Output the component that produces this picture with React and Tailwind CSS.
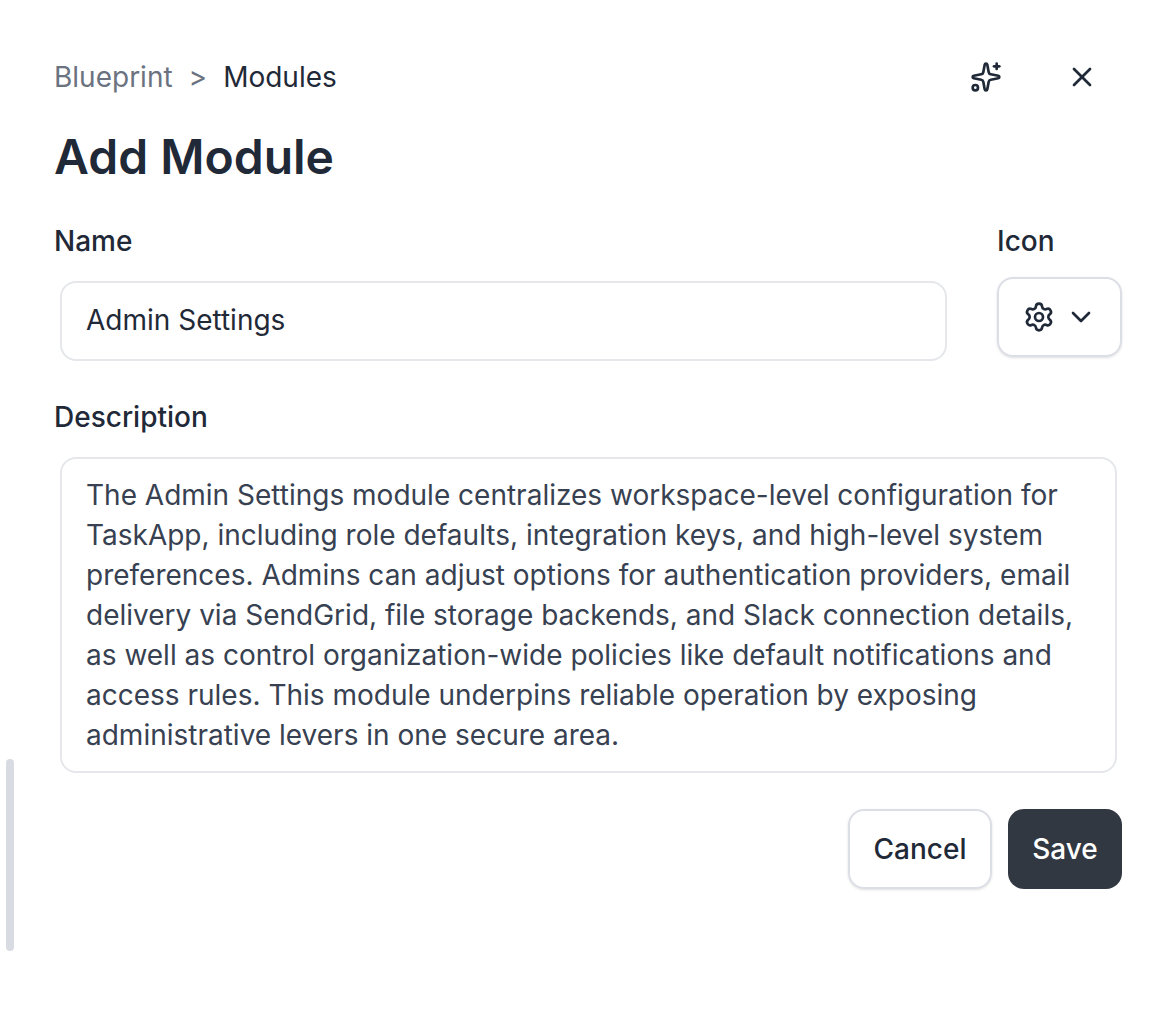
import { useState } from "react";
import { ChevronDown, Settings, Sparkles, X } from "lucide-react";

const defaultDescription =
  "The Admin Settings module centralizes workspace-level configuration for TaskApp, including role defaults, integration keys, and high-level system preferences. Admins can adjust options for authentication providers, email delivery via SendGrid, file storage backends, and Slack connection details, as well as control organization-wide policies like default notifications and access rules. This module underpins reliable operation by exposing administrative levers in one secure area.";

function App() {
  const [name, setName] = useState("Admin Settings");
  const [description, setDescription] = useState(defaultDescription);

  return (
    <div className="relative h-[1022px] w-[1163px] overflow-hidden bg-white pl-[54px] pr-[41px] pt-[56px] font-['Inter',sans-serif] text-[#1f2937]">
      {/* Scrollbar */}
      <div className="absolute left-[6px] top-[759px] h-[192px] w-2 rounded-full bg-[#d9dbe2]"></div>

      {/* Header */}
      <div className="flex h-[42px] items-center justify-between">
        <div className="flex items-center text-[28px] leading-[42px]">
          <span className="text-[#6b7280]">Blueprint</span>
          <span className="ml-4 text-[#6b7280]">&gt;</span>
          <span className="ml-4">Modules</span>
        </div>
        <div className="flex items-center">
          <button>
            <Sparkles size={32} strokeWidth={2} />
          </button>
          <button className="ml-[64px] mr-[24px]">
            <X size={32} strokeWidth={2} />
          </button>
        </div>
      </div>

      <h1 className="mt-[29px] text-[48px] font-semibold leading-[60px]">Add Module</h1>

      {/* Name + icon */}
      <div className="mt-[34px] flex">
        <div className="flex-1">
          <label className="block text-[28px] font-medium leading-[40px]">Name</label>
          <div className="mt-[20px] pl-[6px] pr-[50px]">
            <input
              value={name}
              onChange={(e) => setName(e.target.value)}
              className="h-[80px] w-full rounded-[16px] border-2 border-[#e5e7eb] px-6 pb-[2px] text-[28px] text-[#1f2937] outline-none"
            />
          </div>
        </div>
        <div className="w-[125px]">
          <label className="block text-[28px] font-medium leading-[40px]">Icon</label>
          <button className="mt-[16px] flex h-[80px] w-[125px] items-center justify-center gap-[10px] rounded-[16px] border-2 border-[#dcdee5] shadow-sm">
            <Settings size={32} strokeWidth={2} />
            <ChevronDown size={32} strokeWidth={2} />
          </button>
        </div>
      </div>

      {/* Description */}
      <label className="mt-[36px] block text-[28px] font-medium leading-[40px]">Description</label>
      <div className="mt-[20px] pl-[6px] pr-[5px]">
        <textarea
          value={description}
          onChange={(e) => setDescription(e.target.value)}
          className="block h-[316px] w-full resize-none rounded-[16px] border-2 border-[#e5e7eb] px-6 py-4 text-[28px] leading-[40px] text-[#374151] outline-none"
        />
      </div>

      {/* Actions */}
      <div className="mt-[36px] flex justify-end gap-4">
        <button className="h-[80px] w-[144px] rounded-[16px] border-2 border-[#dcdee5] text-[28px] font-medium shadow-sm">Cancel</button>
        <button className="h-[80px] w-[114px] rounded-[16px] bg-[#323842] text-[28px] font-medium text-white">Save</button>
      </div>
    </div>
  );
}

export default App;
